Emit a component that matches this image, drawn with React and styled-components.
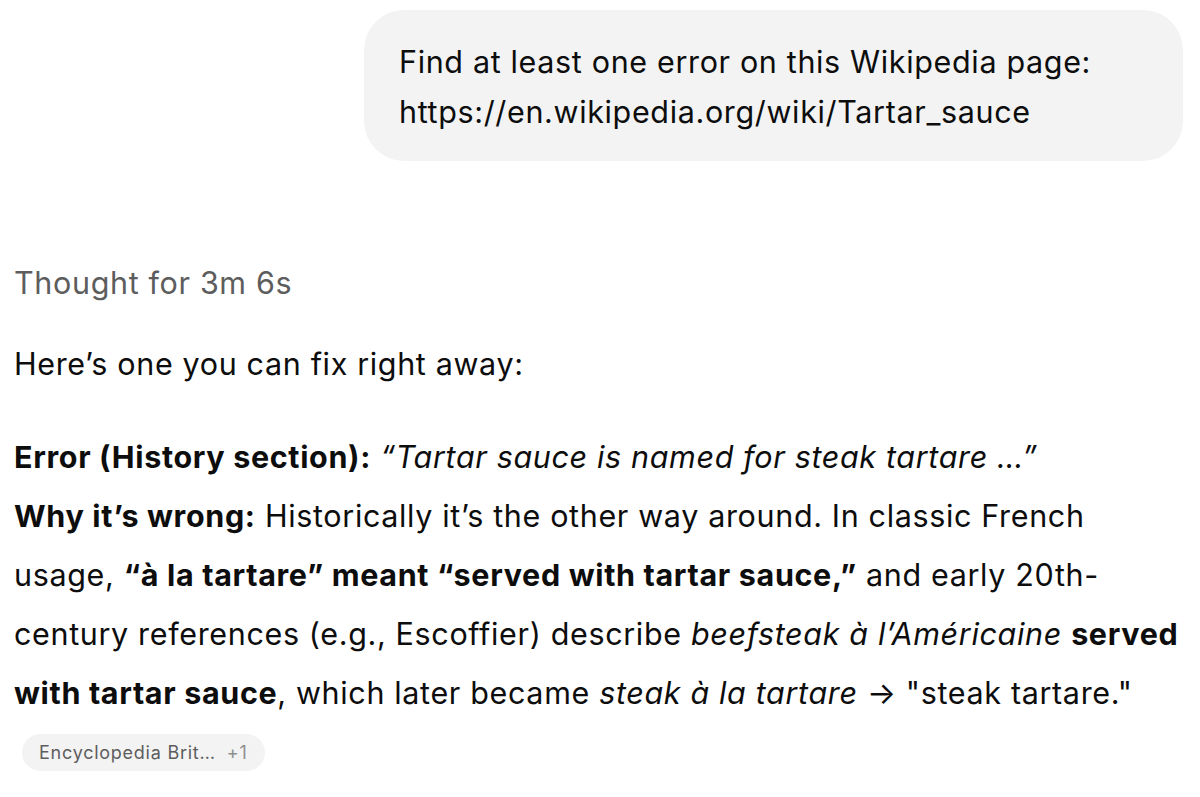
import React from "react";
import styled, { createGlobalStyle } from "styled-components";

const GlobalStyle = createGlobalStyle`
  body {
    margin: 0;
    background: #fff;
    font-family: Inter, "Noto Sans", sans-serif;
    color: #0d0d0d;
  }
`;

const Page = styled.div`
  display: flex;
  flex-direction: column;
  padding: 10px 17px 0 14px;
  font-size: 30.5px;
  letter-spacing: 0.65px;
`;

const UserRow = styled.div`
  display: flex;
  justify-content: flex-end;
`;

const Bubble = styled.div`
  background: #f3f3f3;
  border-radius: 40px;
  padding: 27px 35px 24px 35px;
  line-height: 50px;
  width: 749px;
`;

const Thought = styled.div`
  margin-top: 102px;
  line-height: 40px;
  color: #5d5d5d;
`;

const Para = styled.p`
  margin: ${(p) => p.top}px 0 0 0;
  line-height: ${(p) => p.lh}px;
  max-width: 1172px;
`;

const Pill = styled.div`
  align-self: flex-start;
  margin: 12px 0 0 8px;
  display: flex;
  align-items: center;
  gap: 11px;
  height: 37px;
  padding: 0 17px;
  border-radius: 19px;
  background: #f3f3f3;
  font-size: 18px;
  letter-spacing: 0.75px;
  color: #5d5d5d;
`;

const Count = styled.span`
  color: #8f8f8f;
`;

export default function App() {
  return (
    <>
      <GlobalStyle />
      <Page>
        <UserRow>
          <Bubble>
            Find at least one error on this Wikipedia page:
            <br />
            https://en.wikipedia.org/wiki/Tartar_sauce
          </Bubble>
        </UserRow>
        <Thought>Thought for 3m 6s</Thought>
        <Para top={41} lh={40}>Here’s one you can fix right away:</Para>
        <Para top={43} lh={59}>
          <b>Error (History section):</b> <i>“Tartar sauce is named for steak tartare …”</i>
          <br />
          <b>Why it’s wrong:</b> Historically it’s the other way around. In classic French usage,{" "}
          <b>“à la tartare” meant “served with tartar sauce,”</b> and early 20th-century references
          (e.g., Escoffier) describe <i>beefsteak à l’Américaine</i> <b>served with tartar sauce</b>,
          which later became <i>steak à la tartare</i> → "steak tartare."
        </Para>
        <Pill>
          Encyclopedia Brit… <Count>+1</Count>
        </Pill>
      </Page>
    </>
  );
}
